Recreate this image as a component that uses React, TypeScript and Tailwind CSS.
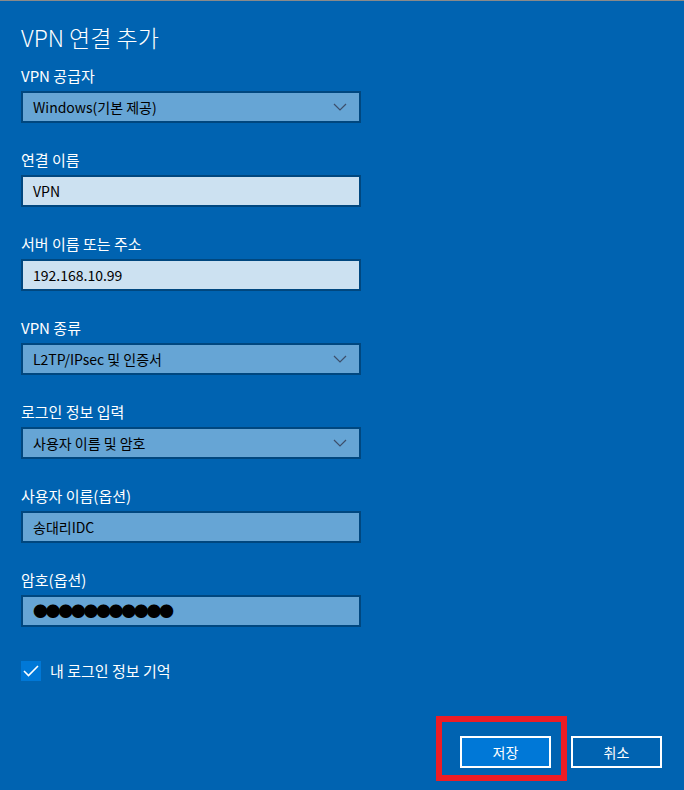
import React from "react";

const font = {
  fontFamily: '"Noto Sans CJK KR", "Noto Sans", "Liberation Sans", sans-serif',
};

function Chevron() {
  return (
    <svg width="14" height="8" viewBox="0 0 14 8" className="shrink-0">
      <path d="M1 1 L7 7 L13 1" fill="none" stroke="#3d4f6b" strokeWidth="1.2" />
    </svg>
  );
}

type FieldProps = {
  label: string;
  value: React.ReactNode;
  kind: "select" | "text" | "filled";
};

function Field({ label, value, kind }: FieldProps) {
  const fill =
    kind === "text" ? "bg-[#cce1f1]" : "bg-[#66a5d5]";
  return (
    <div className="flex flex-col">
      <div className="h-[20px] text-[15px] leading-[20px] text-white">{label}</div>
      <div
        className={`mt-[5px] flex h-[32px] w-[340px] items-center justify-between border-2 border-[#00477f] pl-[10px] pr-[12px] text-[14px] text-black ${fill}`}
      >
        <span className="leading-[20px]">{value}</span>
        {kind === "select" && <Chevron />}
      </div>
    </div>
  );
}

export default function App() {
  return (
    <div
      className="flex h-[790px] w-[684px] flex-col border-t border-[#8a8a8a] bg-[#0063b1]"
      style={font}
    >
      <div className="flex flex-col pl-[21px]">
        <h1 className="mt-[19px] h-[34px] text-[23px] font-light leading-[34px] text-white">
          VPN 연결 추가
        </h1>
        <div className="mt-[12px] flex flex-col gap-[27px]">
          <Field label="VPN 공급자" value="Windows(기본 제공)" kind="select" />
          <Field label="연결 이름" value="VPN" kind="text" />
          <Field label="서버 이름 또는 주소" value="192.168.10.99" kind="text" />
          <Field label="VPN 종류" value="L2TP/IPsec 및 인증서" kind="select" />
          <Field label="로그인 정보 입력" value="사용자 이름 및 암호" kind="select" />
          <Field label="사용자 이름(옵션)" value="송대리IDC" kind="filled" />
          <Field
            label="암호(옵션)"
            value={
              <span className="text-[15px] tracking-[-2.4px]">●●●●●●●●●●●</span>
            }
            kind="filled"
          />
        </div>
        <label className="mt-[34px] flex h-[20px] items-center gap-[9px] text-[15px] text-white">
          <span className="flex h-[20px] w-[20px] items-center justify-center bg-[#0078d7]">
            <svg width="16" height="12" viewBox="0 0 16 12">
              <path d="M1 6 L5.5 10.5 L15 1" fill="none" stroke="white" strokeWidth="1.6" />
            </svg>
          </span>
          <span className="leading-[20px]">내 로그인 정보 기억</span>
        </label>
      </div>

      <div className="mt-auto mb-[22px] flex justify-end gap-[20px] pr-[22px]">
        <div className="relative">
          <button className="h-[32px] w-[91px] border-2 border-white bg-[#0078d7] text-[14px] text-white">
            저장
          </button>
          <div className="pointer-events-none absolute left-[-24px] top-[-20px] h-[65px] w-[131px] border-[6px] border-[#ee1c24]" />
        </div>
        <button className="h-[32px] w-[91px] border-2 border-white bg-[#0063b1] text-[14px] text-white">
          취소
        </button>
      </div>
    </div>
  );
}
